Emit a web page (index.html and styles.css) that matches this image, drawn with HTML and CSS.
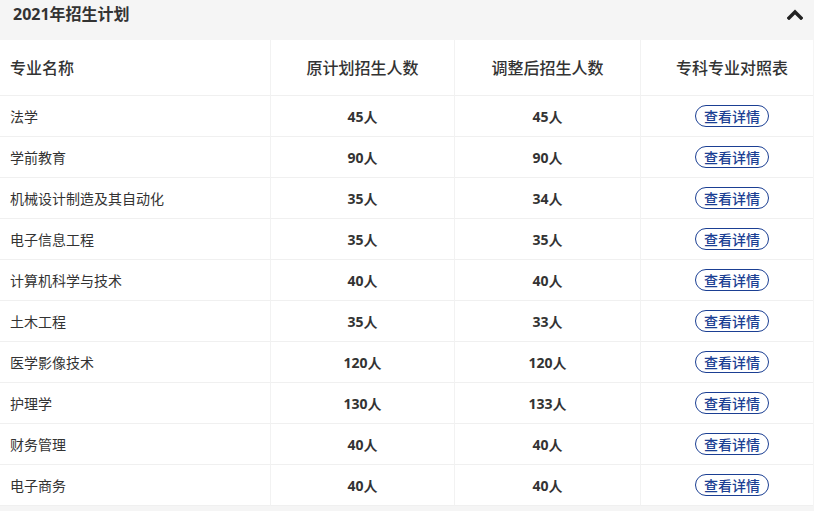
FILE: index.html
```html
<!DOCTYPE html>
<html lang="zh">
<head>
<meta charset="utf-8">
<title>2021年招生计划</title>
<link rel="stylesheet" href="styles.css">
</head>
<body>
<div class="panel">
  <div class="panel-head">
    <h2 class="panel-title">2021年招生计划</h2>
    <svg class="caret" width="16" height="12" viewBox="0 0 16 12"><path d="M2 10 L8 4 L14 10" fill="none" stroke="#222" stroke-width="3.4" stroke-linecap="square"/></svg>
  </div>
  <div class="table">
    <div class="row head">
      <div class="cell left">专业名称</div>
      <div class="cell">原计划招生人数</div>
      <div class="cell">调整后招生人数</div>
      <div class="cell last">专科专业对照表</div>
    </div>
    <div class="row"><div class="cell left">法学</div><div class="cell num">45人</div><div class="cell num">45人</div><div class="cell last"><a class="btn">查看详情</a></div></div>
    <div class="row"><div class="cell left">学前教育</div><div class="cell num">90人</div><div class="cell num">90人</div><div class="cell last"><a class="btn">查看详情</a></div></div>
    <div class="row"><div class="cell left">机械设计制造及其自动化</div><div class="cell num">35人</div><div class="cell num">34人</div><div class="cell last"><a class="btn">查看详情</a></div></div>
    <div class="row"><div class="cell left">电子信息工程</div><div class="cell num">35人</div><div class="cell num">35人</div><div class="cell last"><a class="btn">查看详情</a></div></div>
    <div class="row"><div class="cell left">计算机科学与技术</div><div class="cell num">40人</div><div class="cell num">40人</div><div class="cell last"><a class="btn">查看详情</a></div></div>
    <div class="row"><div class="cell left">土木工程</div><div class="cell num">35人</div><div class="cell num">33人</div><div class="cell last"><a class="btn">查看详情</a></div></div>
    <div class="row"><div class="cell left">医学影像技术</div><div class="cell num">120人</div><div class="cell num">120人</div><div class="cell last"><a class="btn">查看详情</a></div></div>
    <div class="row"><div class="cell left">护理学</div><div class="cell num">130人</div><div class="cell num">133人</div><div class="cell last"><a class="btn">查看详情</a></div></div>
    <div class="row"><div class="cell left">财务管理</div><div class="cell num">40人</div><div class="cell num">40人</div><div class="cell last"><a class="btn">查看详情</a></div></div>
    <div class="row"><div class="cell left">电子商务</div><div class="cell num">40人</div><div class="cell num">40人</div><div class="cell last"><a class="btn">查看详情</a></div></div>
  </div>
</div>
</body>
</html>
```
FILE: styles.css
```css
html, body {
  margin: 0;
  padding: 0;
  background: #f5f5f5;
}
body {
  font-family: "Open Sans", "Noto Sans CJK SC", sans-serif;
  color: #333;
}
.panel {
  width: 814px;
}
.panel-head {
  height: 40px;
  display: flex;
  align-items: flex-start;
  justify-content: space-between;
  padding: 5px 11px 0 13px;
  box-sizing: border-box;
  background: #f5f5f5;
}
.panel-title {
  margin: 0;
  font-size: 16px;
  font-weight: 700;
  color: #333;
  line-height: 18px;
}
.caret {
  margin-top: 3px;
}
.table {
  width: 813px;
  background: #fff;
}
.row {
  display: grid;
  grid-template-columns: 271px 184px 186px 172px;
  height: 41px;
}
.row.head {
  height: 56px;
}
.cell {
  box-sizing: border-box;
  border-right: 1px solid #f2f2f2;
  border-bottom: 1px solid #f0f0f0;
  display: flex;
  align-items: center;
  justify-content: center;
  font-size: 14px;
  color: #333;
  padding-bottom: 1px;
}
.cell.left {
  justify-content: flex-start;
  padding-left: 10px;
}
.cell.last {
  border-right: none;
  padding-left: 10px;
}
.head .cell {
  font-size: 16px;
  font-weight: 500;
  color: #333;
  padding-bottom: 2px;
}
.num {
  font-weight: 700;
}
.btn {
  display: inline-flex;
  align-items: center;
  justify-content: center;
  width: 74px;
  height: 22px;
  box-sizing: border-box;
  border: 1px solid #1b3f93;
  border-radius: 11px;
  color: #1b3f93;
  font-size: 14px;
  font-weight: 500;
}
```
